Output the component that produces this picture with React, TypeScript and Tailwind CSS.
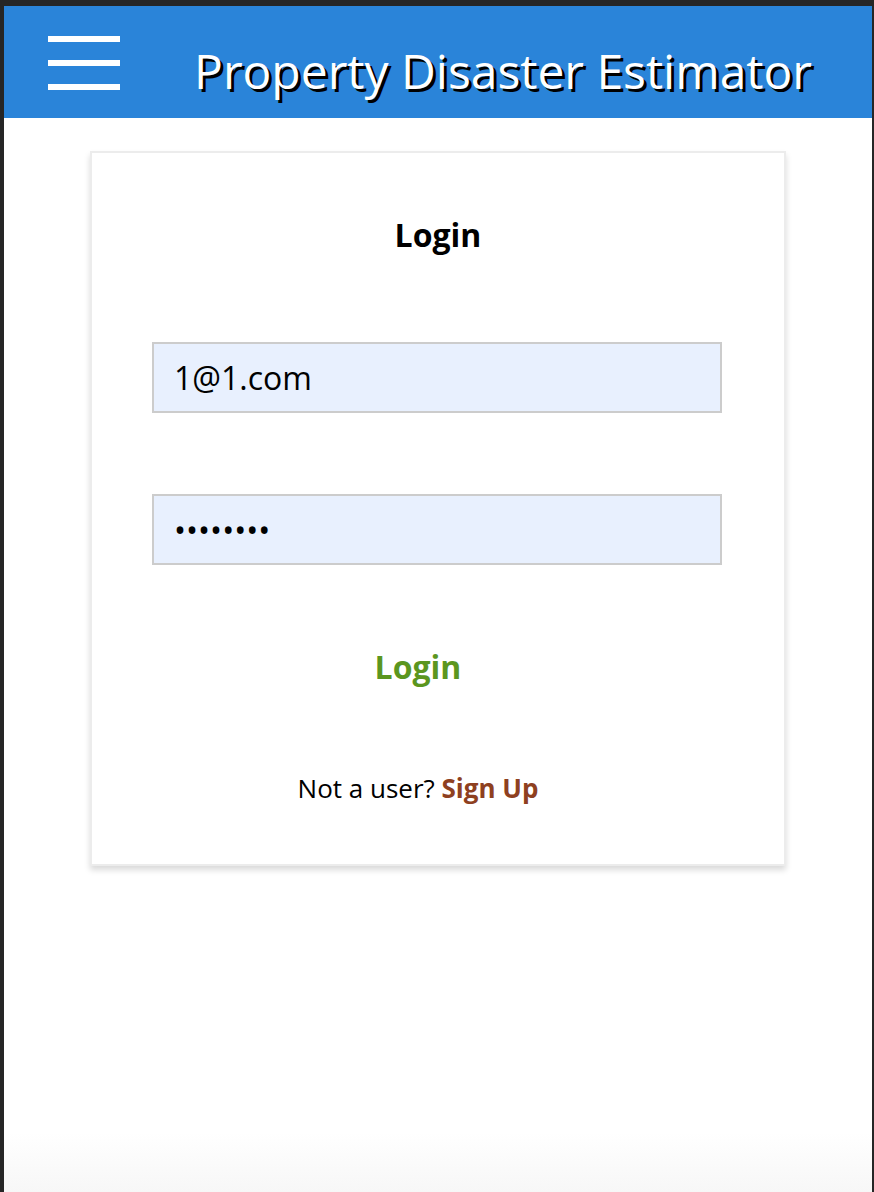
import { useState } from "react";

export default function App() {
    const [email, setEmail] = useState("1@1.com");
    const [password, setPassword] = useState("12345678");
    return (
        <div className="min-h-[1192px] bg-[#262626] pt-[6px] pl-[4px] pr-[2px] font-['Open_Sans',sans-serif]">
            <div className="flex min-h-[1186px] flex-col bg-linear-to-b from-white from-[95%] to-[#f7f7f7]">
                {/* Header */}
                <header className="flex h-[112px] items-start bg-[#2a84d9]">
                    <button className="ml-[44px] mt-[30px] flex w-[72px] flex-col gap-[18px]">
                        <span className="block h-[6px] w-full bg-white" />
                        <span className="block h-[6px] w-full bg-white" />
                        <span className="block h-[6px] w-full bg-white" />
                    </button>
                    <h1 className="ml-[74px] mt-[33px] text-[48px] leading-[64px] text-white [text-shadow:3px_3px_0_#000]">
                        Property Disaster Estimator
                    </h1>
                </header>

                {/* Login card */}
                <div className="mx-auto mt-[33px] flex w-[696px] flex-col items-center border-2 border-[#ececec] bg-white pt-[62px] pb-[60px] shadow-[0_4px_6px_rgba(0,0,0,0.15)]">
                    <h2 className="text-[32px] font-bold leading-[40px] text-black">Login</h2>
                    <input
                        className="mt-[87px] h-[71px] w-[570px] self-start ml-[60px] border-2 border-[#cccccc] bg-[#e8f0fe] px-[20px] text-[32px] text-black outline-none"
                        value={email}
                        onChange={(e) => setEmail(e.target.value)}
                    />
                    <input
                        type="password"
                        className="mt-[81px] h-[71px] w-[570px] self-start ml-[60px] border-2 border-[#cccccc] bg-[#e8f0fe] px-[20px] text-[32px] text-black outline-none"
                        value={password}
                        onChange={(e) => setPassword(e.target.value)}
                    />
                    <button className="mr-[40px] mt-[82px] text-[32px] font-bold leading-[40px] text-[#5b961f]">
                        Login
                    </button>
                    <p className="mr-[40px] mt-[85px] text-[26px] leading-[32px] text-black">
                        Not a user? <a className="font-bold text-[#8e4020]">Sign Up</a>
                    </p>
                </div>
            </div>
        </div>
    );
}
